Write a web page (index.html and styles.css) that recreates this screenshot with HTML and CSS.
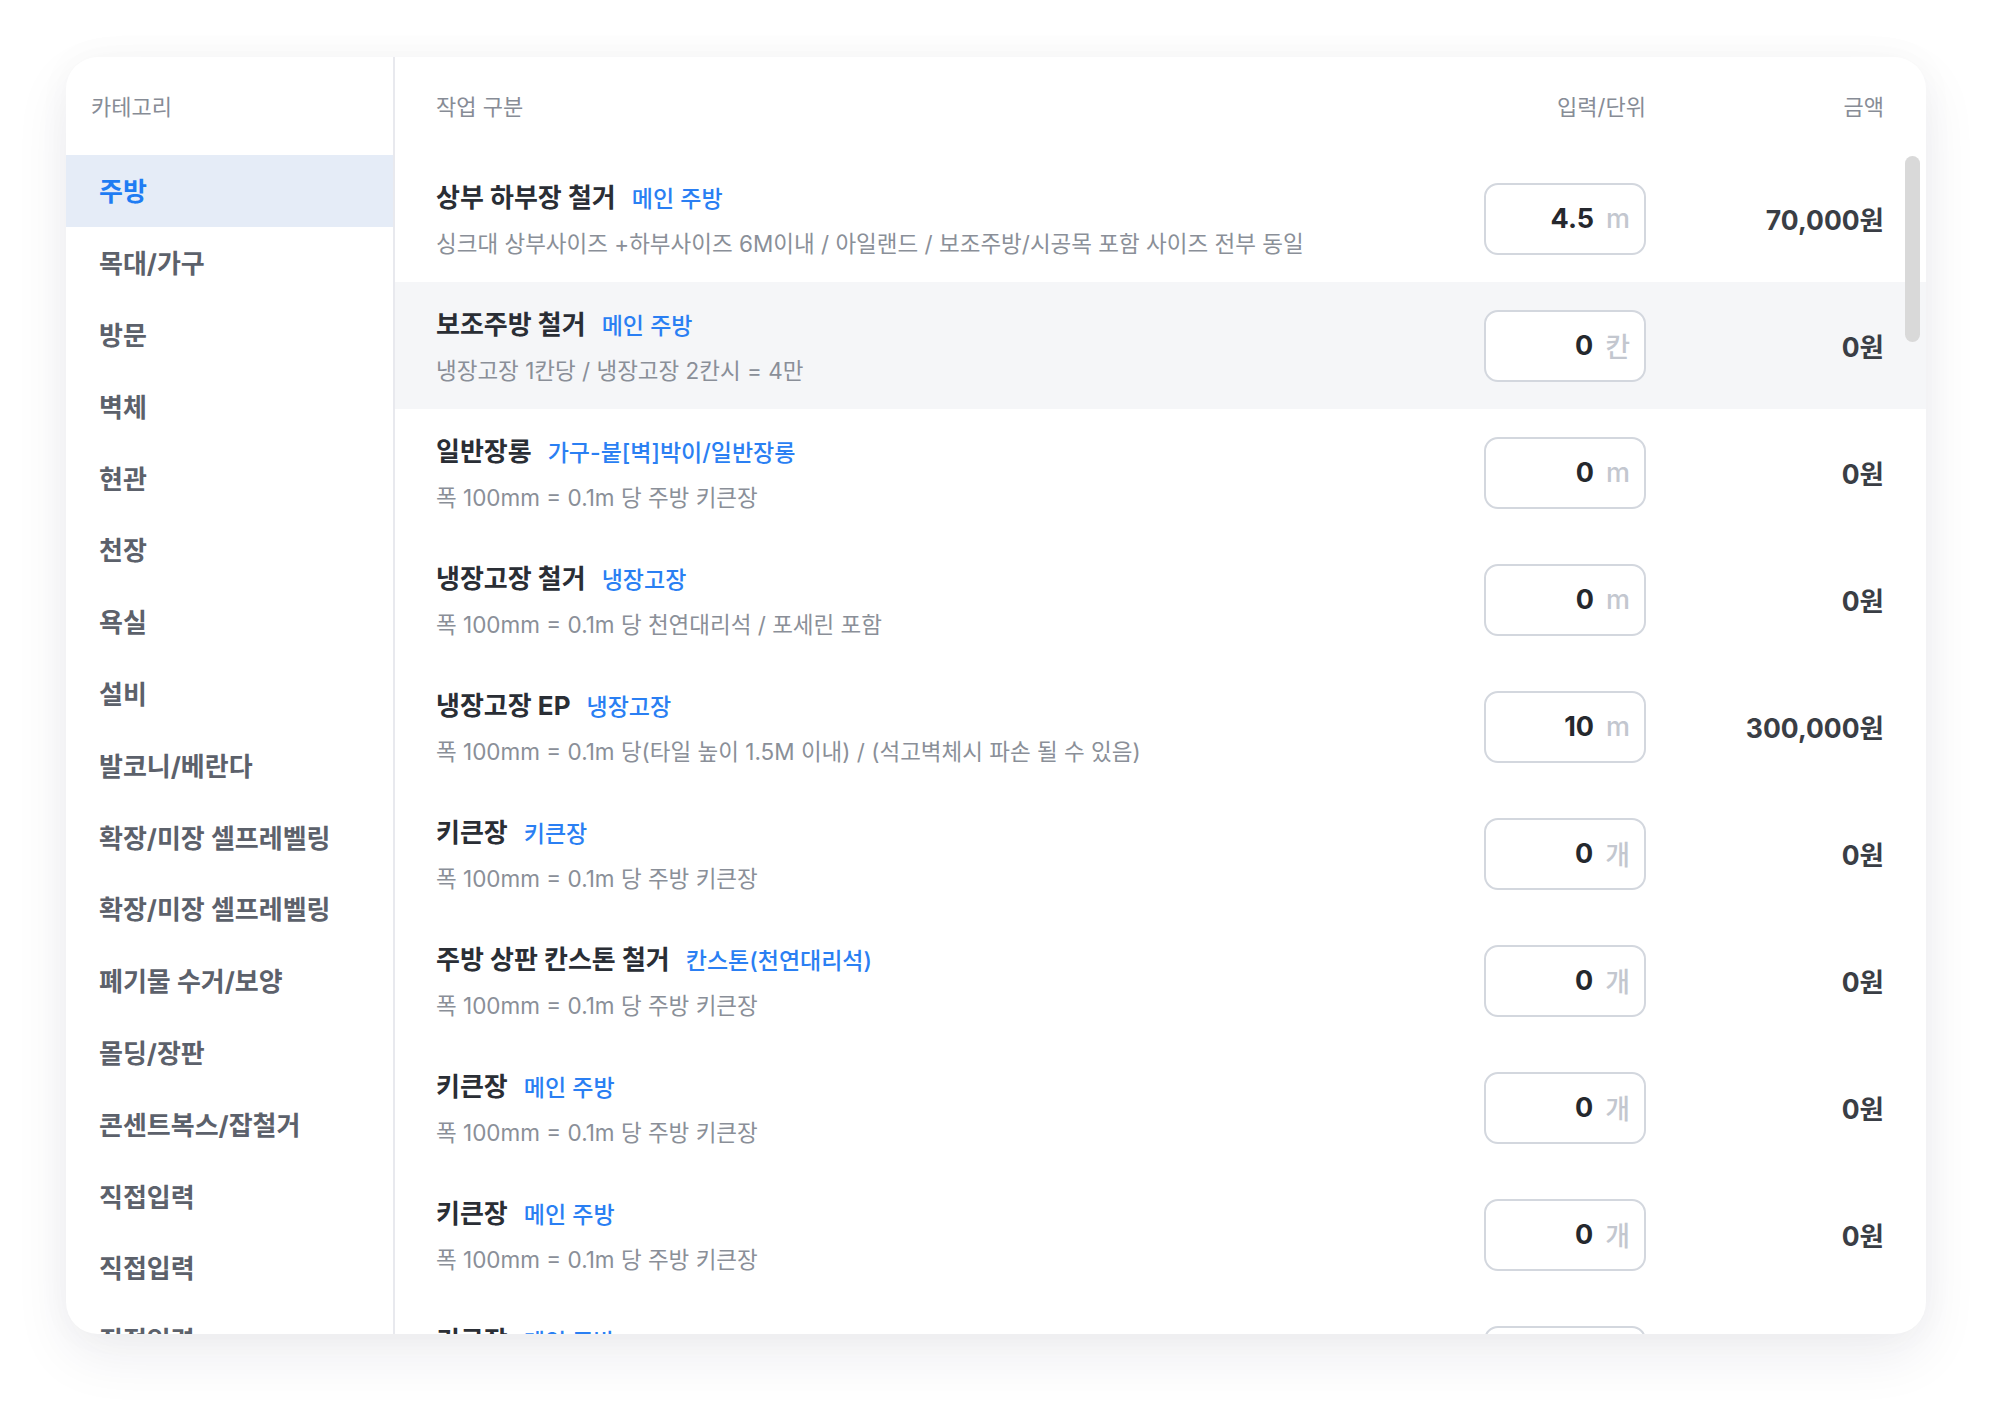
FILE: index.html
```html
<!DOCTYPE html>
<html lang="ko">
<head>
<meta charset="utf-8">
<title>견적 항목</title>
<link rel="stylesheet" href="styles.css">
</head>
<body>
<div class="page">
  <div class="card">
    <aside class="sidebar">
      <div class="side-head">카테고리</div>
      <ul class="cats">
        <li class="cat active">주방</li>
        <li class="cat">목대/가구</li>
        <li class="cat">방문</li>
        <li class="cat">벽체</li>
        <li class="cat">현관</li>
        <li class="cat">천장</li>
        <li class="cat">욕실</li>
        <li class="cat">설비</li>
        <li class="cat">발코니/베란다</li>
        <li class="cat">확장/미장 셀프레벨링</li>
        <li class="cat">확장/미장 셀프레벨링</li>
        <li class="cat">폐기물 수거/보양</li>
        <li class="cat">몰딩/장판</li>
        <li class="cat">콘센트복스/잡철거</li>
        <li class="cat">직접입력</li>
        <li class="cat">직접입력</li>
        <li class="cat">직접입력</li>
      </ul>
    </aside>
    <section class="main">
      <div class="grid head-row">
        <span class="h-work">작업 구분</span>
        <span class="h-right">입력/단위</span>
        <span class="h-right">금액</span>
      </div>
      <div class="rows">
        <div class="grid row">
          <div class="info">
            <div class="title-line"><span class="title">상부 하부장 철거</span><span class="tag">메인 주방</span></div>
            <div class="desc">싱크대 상부사이즈 +하부사이즈 6M이내 / 아일랜드 / 보조주방/시공목 포함 사이즈 전부 동일</div>
          </div>
          <div class="qty"><span class="val">4.5</span><span class="unit">m</span></div>
          <div class="amount">70,000원</div>
        </div>
        <div class="grid row hl">
          <div class="info">
            <div class="title-line"><span class="title">보조주방 철거</span><span class="tag">메인 주방</span></div>
            <div class="desc">냉장고장 1칸당 / 냉장고장 2칸시 = 4만</div>
          </div>
          <div class="qty"><span class="val">0</span><span class="unit">칸</span></div>
          <div class="amount">0원</div>
        </div>
        <div class="grid row">
          <div class="info">
            <div class="title-line"><span class="title">일반장롱</span><span class="tag">가구-붙[벽]박이/일반장롱</span></div>
            <div class="desc">폭 100mm = 0.1m 당 주방 키큰장</div>
          </div>
          <div class="qty"><span class="val">0</span><span class="unit">m</span></div>
          <div class="amount">0원</div>
        </div>
        <div class="grid row">
          <div class="info">
            <div class="title-line"><span class="title">냉장고장 철거</span><span class="tag">냉장고장</span></div>
            <div class="desc">폭 100mm = 0.1m 당 천연대리석 / 포세린 포함</div>
          </div>
          <div class="qty"><span class="val">0</span><span class="unit">m</span></div>
          <div class="amount">0원</div>
        </div>
        <div class="grid row">
          <div class="info">
            <div class="title-line"><span class="title">냉장고장 EP</span><span class="tag">냉장고장</span></div>
            <div class="desc">폭 100mm = 0.1m 당(타일 높이 1.5M 이내) / (석고벽체시 파손 될 수 있음)</div>
          </div>
          <div class="qty"><span class="val">10</span><span class="unit">m</span></div>
          <div class="amount">300,000원</div>
        </div>
        <div class="grid row">
          <div class="info">
            <div class="title-line"><span class="title">키큰장</span><span class="tag">키큰장</span></div>
            <div class="desc">폭 100mm = 0.1m 당 주방 키큰장</div>
          </div>
          <div class="qty"><span class="val">0</span><span class="unit">개</span></div>
          <div class="amount">0원</div>
        </div>
        <div class="grid row">
          <div class="info">
            <div class="title-line"><span class="title">주방 상판 칸스톤 철거</span><span class="tag">칸스톤(천연대리석)</span></div>
            <div class="desc">폭 100mm = 0.1m 당 주방 키큰장</div>
          </div>
          <div class="qty"><span class="val">0</span><span class="unit">개</span></div>
          <div class="amount">0원</div>
        </div>
        <div class="grid row">
          <div class="info">
            <div class="title-line"><span class="title">키큰장</span><span class="tag">메인 주방</span></div>
            <div class="desc">폭 100mm = 0.1m 당 주방 키큰장</div>
          </div>
          <div class="qty"><span class="val">0</span><span class="unit">개</span></div>
          <div class="amount">0원</div>
        </div>
        <div class="grid row">
          <div class="info">
            <div class="title-line"><span class="title">키큰장</span><span class="tag">메인 주방</span></div>
            <div class="desc">폭 100mm = 0.1m 당 주방 키큰장</div>
          </div>
          <div class="qty"><span class="val">0</span><span class="unit">개</span></div>
          <div class="amount">0원</div>
        </div>
        <div class="grid row">
          <div class="info">
            <div class="title-line"><span class="title">키큰장</span><span class="tag">메인 주방</span></div>
            <div class="desc">폭 100mm = 0.1m 당 주방 키큰장</div>
          </div>
          <div class="qty"><span class="val">0</span><span class="unit">개</span></div>
          <div class="amount">0원</div>
        </div>
      </div>
      <div class="scroll-thumb"></div>
    </section>
  </div>
</div>
</body>
</html>
```

FILE: styles.css
```css
* { box-sizing: border-box; }

html, body {
  margin: 0;
  padding: 0;
  background: #ffffff;
}

body {
  font-family: Inter, "Noto Sans CJK KR", "Noto Sans", sans-serif;
  color: #2b2f36;
}

.page {
  width: 1992px;
  height: 1408px;
  padding: 57px 66px 74px 66px;
  overflow: hidden;
}

.card {
  position: relative;
  display: flex;
  width: 1860px;
  height: 1277px;
  background: #ffffff;
  border-radius: 32px;
  overflow: hidden;
  box-shadow: 0 22px 56px rgba(24, 32, 64, 0.075), 0 0 36px rgba(24, 32, 64, 0.03);
}

/* ---------- sidebar ---------- */
.sidebar {
  flex: 0 0 329px;
  border-right: 2px solid #e8e9ee;
}

.side-head {
  height: 98px;
  display: flex;
  align-items: center;
  padding: 0 0 2px 25px;
  font-size: 22px;
  color: #878c96;
}

.cats {
  list-style: none;
  margin: 0;
  padding: 0;
}

.cat {
  height: 71.8px;
  display: flex;
  align-items: center;
  padding: 0 0 2px 33px;
  font-size: 26px;
  font-weight: 700;
  color: #5c616b;
  white-space: nowrap;
}

.cat.active {
  background: #e5ecf7;
  color: #1f7cf3;
}

/* ---------- main ---------- */
.main {
  position: relative;
  flex: 1 1 auto;
  min-width: 0;
}

.grid {
  display: grid;
  grid-template-columns: 1fr 162px 238px;
  align-items: center;
  padding: 0 42px 0 41px;
}

.head-row {
  height: 98px;
  padding-bottom: 2px;
  font-size: 22px;
  color: #878c96;
}

.h-right {
  text-align: right;
}

.row {
  height: 127px;
}

.row.hl {
  background: #f5f6f8;
}

.info {
  min-width: 0;
  padding-top: 3px;
}

.title-line {
  line-height: 34px;
  white-space: nowrap;
}

.title {
  font-size: 26px;
  font-weight: 700;
  color: #2a2e35;
}

.tag {
  margin-left: 16px;
  font-size: 23px;
  font-weight: 500;
  color: #2a7ff3;
}

.desc {
  margin-top: 11px;
  line-height: 30px;
  font-size: 22.5px;
  color: #8a8f98;
  white-space: nowrap;
}

.qty {
  height: 72px;
  display: flex;
  align-items: center;
  justify-content: flex-end;
  gap: 12px;
  padding-right: 14px;
  background: #ffffff;
  border: 2px solid #d3d7de;
  border-radius: 14px;
}

.val {
  font-size: 27px;
  font-weight: 700;
  color: #25282e;
}

.unit {
  font-size: 27px;
  font-weight: 500;
  color: #c3c7cf;
}

.amount {
  text-align: right;
  font-size: 26.5px;
  font-weight: 700;
  color: #3a3e45;
}

.scroll-thumb {
  position: absolute;
  top: 99px;
  right: 6px;
  width: 15px;
  height: 186px;
  border-radius: 8px;
  background: #d9d9d9;
}
```
